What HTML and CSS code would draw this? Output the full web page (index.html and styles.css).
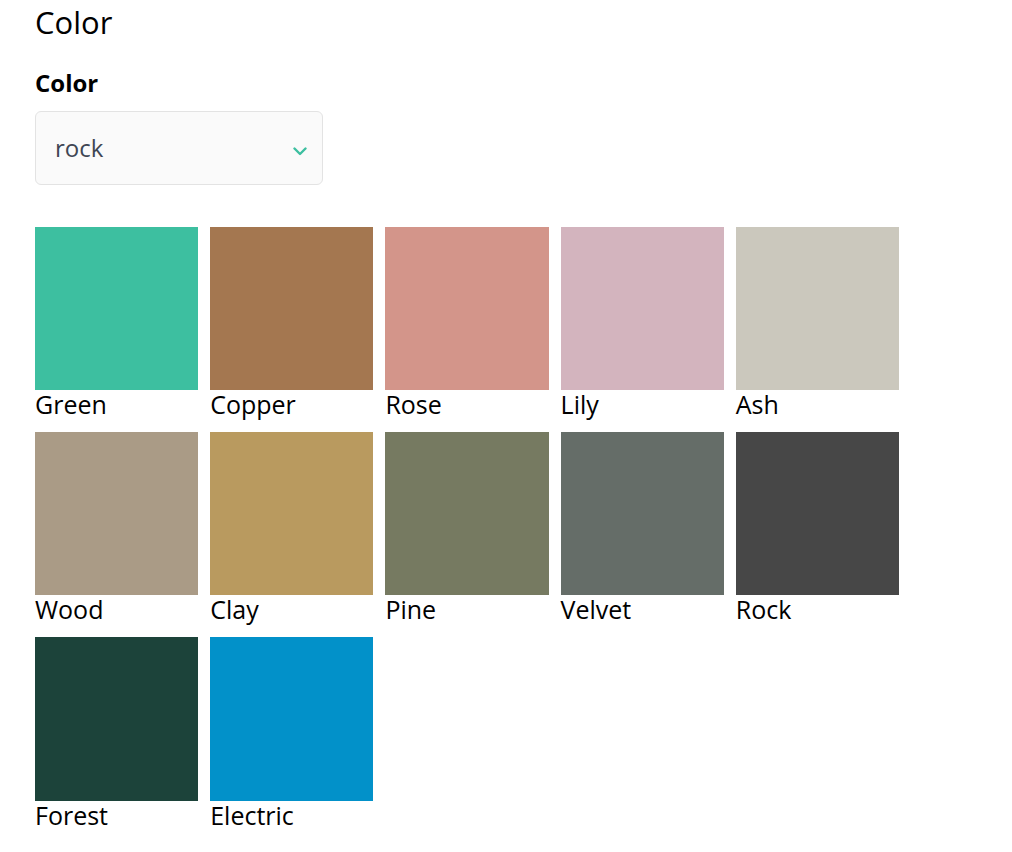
FILE: index.html
```html
<!DOCTYPE html>
<html lang="en">
<head>
    <meta charset="UTF-8">
    <title>Color</title>
    <link rel="stylesheet" href="styles.css">
</head>
<body>
    <div class="page">
        <h2 class="title">Color</h2>

        <p class="field-label">Color</p>
        <div class="select-box">
            <span class="select-value">rock</span>
            <svg class="chevron" width="14" height="9" viewBox="0 0 14 9">
                <path d="M1.5 1.5 L7 7 L12.5 1.5" fill="none" stroke="#3dbfa0" stroke-width="2.4" stroke-linecap="round" stroke-linejoin="round"/>
            </svg>
        </div>

        <div class="swatches">
            <div class="swatch"><div class="chip" style="background: #3dbfa0;"></div><span>Green</span></div>
            <div class="swatch"><div class="chip" style="background: #a47750;"></div><span>Copper</span></div>
            <div class="swatch"><div class="chip" style="background: #d3958a;"></div><span>Rose</span></div>
            <div class="swatch"><div class="chip" style="background: #d3b4be;"></div><span>Lily</span></div>
            <div class="swatch"><div class="chip" style="background: #cbc8bd;"></div><span>Ash</span></div>
            <div class="swatch"><div class="chip" style="background: #aa9b86;"></div><span>Wood</span></div>
            <div class="swatch"><div class="chip" style="background: #b99a5f;"></div><span>Clay</span></div>
            <div class="swatch"><div class="chip" style="background: #767a61;"></div><span>Pine</span></div>
            <div class="swatch"><div class="chip" style="background: #656d68;"></div><span>Velvet</span></div>
            <div class="swatch"><div class="chip" style="background: #474747;"></div><span>Rock</span></div>
            <div class="swatch"><div class="chip" style="background: #1c433a;"></div><span>Forest</span></div>
            <div class="swatch"><div class="chip" style="background: #0291c9;"></div><span>Electric</span></div>
        </div>
    </div>
</body>
</html>
```

FILE: styles.css
```css
body {
    margin: 0;
    font-family: "Open Sans", "Noto Sans", sans-serif;
    color: #000;
    background: #fff;
}

.page {
    padding: 4px 35px 20px;
}

.title {
    font-size: 31px;
    font-weight: 400;
    line-height: 36px;
    margin: 0;
}

.field-label {
    font-size: 24px;
    font-weight: 700;
    line-height: 30px;
    margin: 28px 0 13px;
}

.select-box {
    width: 288px;
    height: 74px;
    box-sizing: border-box;
    display: flex;
    align-items: center;
    justify-content: space-between;
    padding: 0 15px 0 19px;
    background: #fafafa;
    border: 1px solid #e3e3e3;
    border-radius: 6px;
}

.select-value {
    font-size: 24px;
    line-height: 30px;
    color: #3f4654;
}

.chevron {
    margin-top: 6px;
}

.swatches {
    width: 864px;
    margin-top: 42px;
    display: grid;
    grid-template-columns: repeat(5, 1fr);
    gap: 12px;
}

.chip {
    aspect-ratio: 1 / 1;
}

.swatch span {
    display: block;
    font-size: 25px;
    line-height: 30px;
    margin-top: -1px;
    margin-bottom: 1px;
}
```
